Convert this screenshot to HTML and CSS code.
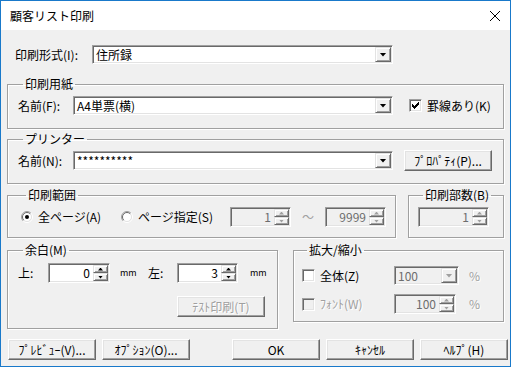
FILE: index.html
```html
<!DOCTYPE html>
<html lang="ja">
<head>
	<meta charset="UTF-8">
	<title>顧客リスト印刷</title>
	<link rel="stylesheet" href="styles.css">
</head>
<body>
	<div class="window">
		<div class="titlebar">
			<span class="title">顧客リスト印刷</span>
			<svg class="close" width="10" height="10" viewBox="0 0 10 10"><path d="M0 0L10 10M10 0L0 10" stroke="#000" stroke-width="1" fill="none"/></svg>
		</div>
		<div class="client">
			<!-- 印刷形式 -->
			<div class="row format">
				<span class="lbl w77">印刷形式(I):</span>
				<div class="combo w301"><span class="val">住所録</span><span class="drop"><i class="tri"></i></span></div>
			</div>

			<fieldset class="group paper">
				<legend>印刷用紙</legend>
				<div class="row h19">
					<span class="lbl w55">名前(F):</span>
					<div class="combo w320"><span class="val">A4単票(横)</span><span class="drop"><i class="tri"></i></span></div>
					<span class="check ml16"><svg width="7" height="7" viewBox="0 0 7 7" shape-rendering="crispEdges"><path d="M0 2h1v3H0zM1 3h1v3H1zM2 4h1v3H2zM3 3h1v3H3zM4 2h1v3H4zM5 1h1v3H5zM6 0h1v3H6z" fill="#000"/></svg></span>
					<span class="ctext">罫線あり(K)</span>
				</div>
			</fieldset>

			<fieldset class="group printer">
				<legend>プリンター</legend>
				<div class="row h21">
					<span class="lbl w55">名前(N):</span>
					<div class="combo w320"><span class="val">**********</span><span class="drop"><i class="tri"></i></span></div>
					<span class="btn ml11">ﾌﾟﾛﾊﾟﾃｨ(P)...</span>
				</div>
			</fieldset>

			<div class="split s1">
				<fieldset class="group range">
					<legend>印刷範囲</legend>
					<div class="row h20">
						<span class="radio w100">
							<svg width="12" height="12" viewBox="0 0 12 12">
								<circle cx="6" cy="6" r="4.5" fill="#fff"/>
								<path d="M2.1 9.9A5.5 5.5 0 0 1 9.9 2.1" stroke="#a0a0a0" fill="none"/>
								<path d="M9.9 2.1A5.5 5.5 0 0 1 2.1 9.9" stroke="#fff" fill="none"/>
								<path d="M2.8 9.2A4.5 4.5 0 0 1 9.2 2.8" stroke="#696969" fill="none"/>
								<path d="M9.2 2.8A4.5 4.5 0 0 1 2.8 9.2" stroke="#e3e3e3" fill="none"/>
								<circle cx="6" cy="6" r="2" fill="#000"/>
							</svg>
							全ページ(A)
						</span>
						<span class="radio w109">
							<svg width="12" height="12" viewBox="0 0 12 12">
								<circle cx="6" cy="6" r="4.5" fill="#fff"/>
								<path d="M2.1 9.9A5.5 5.5 0 0 1 9.9 2.1" stroke="#a0a0a0" fill="none"/>
								<path d="M9.9 2.1A5.5 5.5 0 0 1 2.1 9.9" stroke="#fff" fill="none"/>
								<path d="M2.8 9.2A4.5 4.5 0 0 1 9.2 2.8" stroke="#696969" fill="none"/>
								<path d="M9.2 2.8A4.5 4.5 0 0 1 2.8 9.2" stroke="#e3e3e3" fill="none"/>
							</svg>
							ページ指定(S)
						</span>
						<div class="spin off w61"><span class="val">1</span><span class="arrows"><i class="up"></i><i class="down"></i></span></div>
						<span class="tilde">～</span>
						<div class="spin off w61"><span class="val">9999</span><span class="arrows"><i class="up"></i><i class="down"></i></span></div>
					</div>
				</fieldset>

				<fieldset class="group copies">
					<legend>印刷部数(B)</legend>
					<div class="row h20">
						<div class="spin off w71"><span class="val">1</span><span class="arrows"><i class="up"></i><i class="down"></i></span></div>
					</div>
				</fieldset>
			</div>

			<div class="split s2">
				<fieldset class="group margin">
					<legend>余白(M)</legend>
					<div class="row h20">
						<span class="lbl w30">上:</span>
						<div class="spin w62"><span class="val">0</span><span class="arrows"><i class="up"></i><i class="down"></i></span></div>
						<span class="unit ml10 w28">mm</span>
						<span class="lbl w29">左:</span>
						<div class="spin w61"><span class="val">3</span><span class="arrows"><i class="up"></i><i class="down"></i></span></div>
						<span class="unit ml12">mm</span>
					</div>
					<div class="row test">
						<span class="btn off">ﾃｽﾄ印刷(T)</span>
					</div>
				</fieldset>

				<fieldset class="group zoom">
					<legend>拡大/縮小</legend>
					<div class="row h19">
						<span class="checkitem">
							<span class="check"></span>
							<span class="ctext">全体(Z)</span>
						</span>
						<div class="combo off w65"><span class="val">100</span><span class="drop"><i class="tri"></i></span></div>
						<span class="pct ml10">%</span>
					</div>
					<div class="row h20 zrow2">
						<span class="checkitem dim">
							<span class="check off"></span>
							<span class="ctext">ﾌｫﾝﾄ(W)</span>
						</span>
						<div class="spin off w62"><span class="val">100</span><span class="arrows"><i class="up"></i><i class="down"></i></span></div>
						<span class="pct ml13">%</span>
					</div>
				</fieldset>
			</div>

			<div class="row buttons">
				<span class="btn w87">ﾌﾟﾚﾋﾞｭｰ(V)...</span>
				<span class="btn w87">ｵﾌﾟｼｮﾝ(O)...</span>
				<span class="btn w87 ok">OK</span>
				<span class="btn w87">ｷｬﾝｾﾙ</span>
				<span class="btn w87">ﾍﾙﾌﾟ(H)</span>
			</div>
		</div>
	</div>
</body>
</html>
```

FILE: styles.css
```css
* {
	box-sizing: border-box;
}
body {
	margin: 0;
	background: #fff;
	font-family: "Noto Sans CJK JP", "Noto Sans", sans-serif;
	font-size: 12px;
	line-height: 14px;
	color: #000;
}
.window {
	width: 511px;
	height: 367px;
	border: 1px solid #1979ca;
	background: #f0f0f0;
	display: flex;
	flex-direction: column;
}
.titlebar {
	height: 29px;
	flex: none;
	background: #fff;
	display: flex;
	align-items: center;
	justify-content: space-between;
	padding: 0 10px 0 9px;
}
.close {
	display: block;
}
.client {
	flex: 1;
	padding: 15px 6px 0 6px;
	display: flex;
	flex-direction: column;
}

.row {
	display: flex;
	align-items: center;
}
.h19 { height: 19px; }
.h20 { height: 20px; }
.h21 { height: 21px; }
.w28 { width: 28px; }
.w29 { width: 29px; }
.w30 { width: 30px; }
.w55 { width: 55px; }
.w61 { width: 61px; }
.w62 { width: 62px; }
.w65 { width: 65px; }
.w71 { width: 71px; }
.w77 { width: 77px; }
.w87 { width: 87px; }
.w100 { width: 100px; }
.w109 { width: 109px; }
.w301 { width: 301px; }
.w320 { width: 320px; }
.ml10 { margin-left: 10px; }
.ml11 { margin-left: 11px; }
.ml12 { margin-left: 12px; }
.ml13 { margin-left: 13px; }
.ml16 { margin-left: 16px; }
.lbl {
	flex: none;
	white-space: nowrap;
}

.format {
	height: 19px;
	padding-left: 8px;
}

/* グループ枠 */
.group {
	margin: 0;
	padding: 0;
	min-width: 0;
	border: 1px solid #a0a0a0;
	box-shadow: 1px 1px 0 #fff, inset 1px 1px 0 #fff;
}
.group legend {
	padding: 0 2px;
	margin-left: 5px;
	line-height: 14px;
}
.paper {
	margin-top: 13px;
	height: 52px;
	padding: 5px 0 0 10px;
}
.printer {
	margin-top: 3px;
	height: 52px;
	padding: 4px 0 0 10px;
}
.split {
	display: flex;
	align-items: flex-start;
	justify-content: space-between;
}
.s1 {
	margin-top: 4px;
}
.s2 {
	margin-top: 5px;
}
.range {
	width: 389px;
	height: 50px;
	padding: 5px 0 0 13px;
}
.copies {
	width: 96px;
	height: 50px;
	padding: 5px 0 0 9px;
}
.margin {
	width: 271px;
	height: 86px;
	padding: 6px 0 0 10px;
}
.zoom {
	width: 211px;
	height: 79px;
	padding: 9px 0 0 8px;
}
.test {
	margin-top: 13px;
	padding-left: 159px;
}
.zrow2 {
	margin-top: 9px;
}

/* コンボボックス */
.combo {
	display: flex;
	flex: none;
	height: 19px;
	padding: 1px;
	background: #fff;
	border: 1px solid;
	border-color: #a0a0a0 #fff #fff #a0a0a0;
	box-shadow: inset 1px 1px 0 #696969, inset -1px -1px 0 #e3e3e3;
}
.combo .val {
	flex: 1;
	padding-left: 2px;
	line-height: 15px;
	white-space: nowrap;
	overflow: hidden;
}
.drop {
	width: 16px;
	display: flex;
	align-items: center;
	justify-content: center;
	background: #f0f0f0;
	border: 1px solid;
	border-color: #e3e3e3 #696969 #696969 #e3e3e3;
	box-shadow: inset 1px 1px 0 #fff, inset -1px -1px 0 #a0a0a0;
}
.tri {
	display: block;
	width: 7px;
	height: 4px;
	background: #000;
	clip-path: polygon(0 0, 100% 0, 50% 100%);
}
.combo.off {
	background: #f0f0f0;
	color: #6d6d6d;
}
.combo.off .tri {
	background: #a0a0a0;
}

/* スピンボックス */
.spin {
	display: flex;
	flex: none;
	height: 20px;
	padding: 1px;
	background: #fff;
	border: 1px solid;
	border-color: #a0a0a0 #fff #fff #a0a0a0;
	box-shadow: inset 1px 1px 0 #696969, inset -1px -1px 0 #e3e3e3;
}
.spin .val {
	flex: 1;
	text-align: right;
	padding-right: 3px;
	line-height: 16px;
}
.arrows {
	width: 15px;
	display: flex;
	flex-direction: column;
}
.arrows i {
	flex: 1;
	display: flex;
	align-items: center;
	justify-content: center;
	background: #f0f0f0;
	border: 1px solid;
	border-color: #e3e3e3 #696969 #696969 #e3e3e3;
	box-shadow: inset 1px 1px 0 #fff, inset -1px -1px 0 #a0a0a0;
}
.arrows i::after {
	content: "";
	display: block;
	width: 5px;
	height: 3px;
	background: #000;
}
.arrows .up::after {
	clip-path: polygon(50% 0, 100% 100%, 0 100%);
}
.arrows .down::after {
	clip-path: polygon(0 0, 100% 0, 50% 100%);
}
.spin.off {
	background: #f0f0f0;
	color: #6d6d6d;
}
.spin.off .arrows i::after {
	background: #a0a0a0;
}

/* チェック・ラジオ */
.check {
	flex: none;
	width: 13px;
	height: 13px;
	display: flex;
	align-items: center;
	justify-content: center;
	background: #fff;
	border: 1px solid;
	border-color: #a0a0a0 #fff #fff #a0a0a0;
	box-shadow: inset 1px 1px 0 #696969, inset -1px -1px 0 #e3e3e3;
}
.check.off {
	background: #f0f0f0;
}
.ctext {
	margin-left: 5px;
	white-space: nowrap;
}
.checkitem {
	width: 92px;
	display: flex;
	align-items: center;
}
.dim .ctext {
	color: #a0a0a0;
	text-shadow: 1px 1px 0 #fff;
}
.radio {
	flex: none;
	display: flex;
	align-items: center;
	gap: 5px;
	white-space: nowrap;
}
.radio svg {
	flex: none;
}
.tilde {
	width: 34px;
	text-align: center;
	color: #a0a0a0;
}
.unit {
	font-size: 9px;
}
.pct {
	color: #a0a0a0;
	text-shadow: 1px 1px 0 #fff;
}

/* ボタン */
.btn {
	flex: none;
	width: 88px;
	height: 21px;
	display: flex;
	align-items: center;
	justify-content: center;
	white-space: nowrap;
	background: #f0f0f0;
	border: 1px solid;
	border-color: #fff #696969 #696969 #fff;
	box-shadow: inset -1px -1px 0 #a0a0a0, inset 1px 1px 0 #e3e3e3;
}
.btn.off {
	color: #a0a0a0;
	text-shadow: 1px 1px 0 #fff;
}
.buttons {
	margin-top: 10px;
	padding-left: 1px;
	gap: 6px;
}
.buttons .ok {
	margin-left: 36px;
}
```
